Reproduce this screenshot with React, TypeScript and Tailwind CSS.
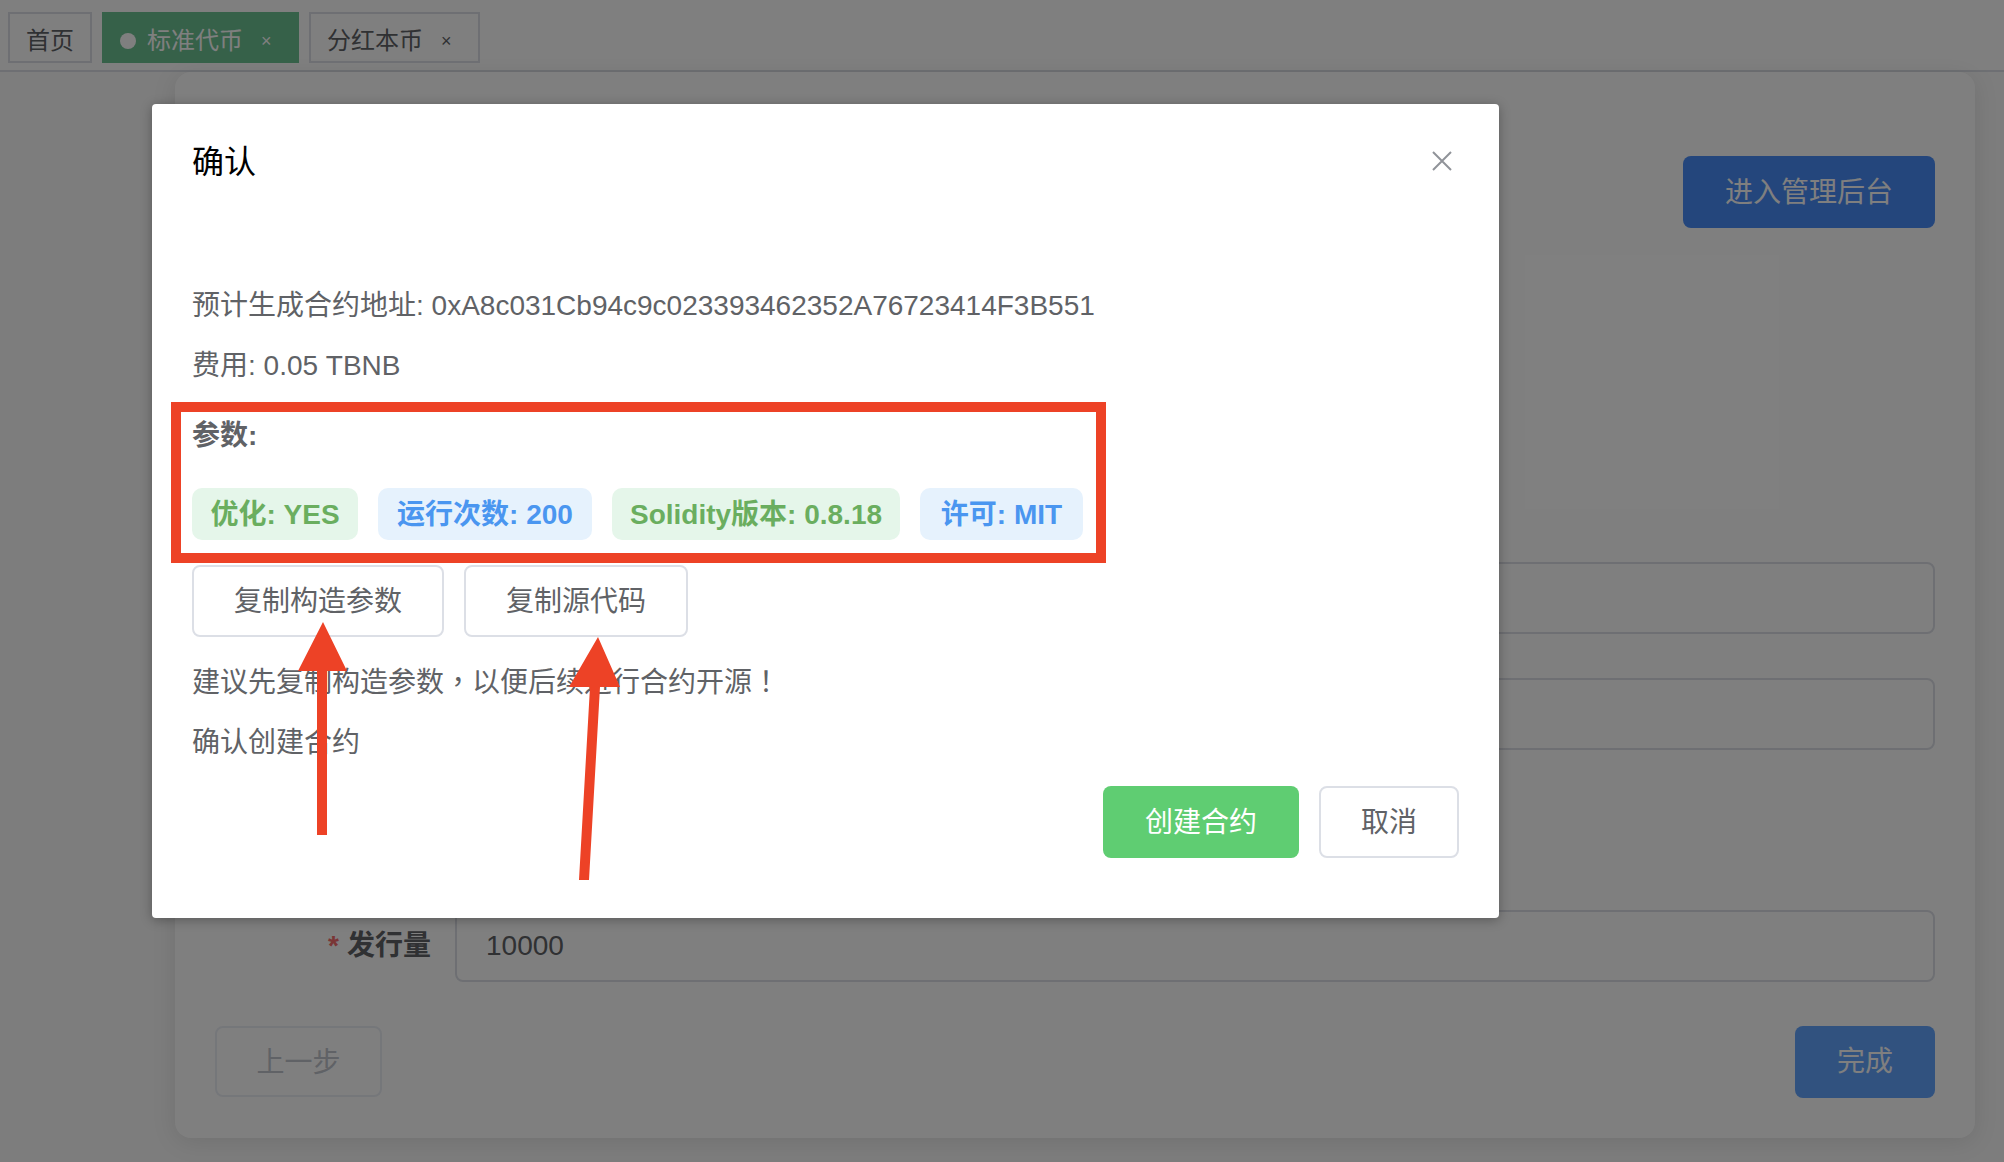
const tags = [
  { label: '优化: YES', green: true, width: 'w-[166px]' },
  { label: '运行次数: 200', green: false, width: 'w-[214px]' },
  { label: 'Solidity版本: 0.8.18', green: true, width: 'w-[288px]' },
  { label: '许可: MIT', green: false, width: 'w-[163px]' },
];

function Tab({ label, active, closable, width }: { label: string; active?: boolean; closable?: boolean; width: string }) {
  return (
    <div
      className={`flex h-[51px] items-center border-2 pt-[6px] text-[24px] ${width} ${
        active ? 'border-[#6cc292] bg-[#6cc292] pl-[16px] text-white' : 'border-[#dcdfe6] pl-[16px] text-[#606266]'
      }`}
    >
      {active && <span className="mr-[11px] h-[16px] w-[16px] rounded-full bg-white" />}
      <span>{label}</span>
      {closable && <span className="ml-[18px] text-[18px] leading-none">×</span>}
    </div>
  );
}

function FormRow({ label, value }: { label?: string; value?: string }) {
  return (
    <div className="flex items-center gap-[24px]">
      <div className="w-[216px] text-right text-[28px] font-bold text-[#606266]">
        {label && (
          <>
            <span className="mr-[8px] text-[#f56c6c]">*</span>
            {label}
          </>
        )}
      </div>
      <div className="flex h-[72px] flex-1 items-center rounded-[8px] border-2 border-[#dcdfe6] px-[29px] text-[28px] text-[#606266]">
        {value}
      </div>
    </div>
  );
}

export default function App() {
  return (
    <div className="relative h-[1162px] w-[2004px] overflow-hidden bg-[#fafafa] font-['Liberation_Sans','Noto_Sans_CJK_SC',sans-serif]">
      {/* Tabs bar */}
      <div className="flex h-[72px] items-start gap-[10px] border-b-2 border-[#dcdfe6] bg-white pl-[8px] pt-[12px]">
        <Tab label="首页" width="w-[84px]" />
        <Tab label="标准代币" active closable width="w-[197px]" />
        <Tab label="分红本币" closable width="w-[171px]" />
      </div>

      {/* Page card */}
      <div className="ml-[175px] h-[1066px] w-[1800px] rounded-[16px] bg-white px-[40px] pt-[84px] shadow-[0_4px_24px_rgba(0,0,0,0.1)]">
        <div className="flex justify-end">
          <button className="h-[72px] w-[252px] rounded-[8px] bg-[#488cf8] pt-[2px] text-[28px] text-white">进入管理后台</button>
        </div>
        <div className="mt-[334px]">
          <FormRow />
        </div>
        <div className="mt-[44px]">
          <FormRow />
        </div>
        <div className="mt-[160px]">
          <FormRow label="发行量" value="10000" />
        </div>
        <div className="mt-[44px] flex justify-between">
          <button className="h-[71px] w-[167px] rounded-[8px] border-2 border-[#ebeef5] pt-[2px] text-[28px] text-[#c0c4cc]">上一步</button>
          <button className="h-[72px] w-[140px] rounded-[8px] bg-[#62a4fe] text-[28px] text-white">完成</button>
        </div>
      </div>

      {/* Overlay + dialog */}
      <div className="absolute inset-0 bg-black/50">
        <div className="ml-[152px] mt-[104px] h-[814px] w-[1347px] rounded-[4px] bg-white px-[40px] pt-[36px] shadow-[0_2px_12px_rgba(0,0,0,0.3)]">
          <div className="flex h-[44px] items-center justify-between pr-[7px]">
            <span className="text-[32px] leading-[44px] text-black">确认</span>
            <svg width="20" height="20" viewBox="0 0 20 20" className="-mt-[2px] text-[#909399]">
              <path d="M1 1L19 19M19 1L1 19" stroke="currentColor" strokeWidth="2" fill="none" />
            </svg>
          </div>

          <div className="mt-[102px] text-[28px] leading-[40px] text-[#606266]">
            预计生成合约地址: 0xA8c031Cb94c9c023393462352A76723414F3B551
          </div>
          <div className="mt-[20px] text-[28px] leading-[40px] text-[#606266]">费用: 0.05 TBNB</div>

          {/* Red annotation box */}
          <div className="-ml-[21px] mt-[16px] h-[161px] w-[935px] border-[10px] border-[#ed4226] pl-[11px]">
            <div className="mt-[4px] text-[28px] font-bold leading-[40px] text-[#606266]">参数:</div>
            <div className="mt-[32px] flex gap-[20px]">
              {tags.map((tag) => (
                <span
                  key={tag.label}
                  className={`flex h-[52px] items-center justify-center whitespace-nowrap rounded-[10px] pt-[2px] text-[28px] font-bold ${tag.width} ${
                    tag.green ? 'bg-[#e5f6ea] text-[#6aae5f]' : 'bg-[#e6f2fd] text-[#4a96f0]'
                  }`}
                >
                  {tag.label}
                </span>
              ))}
            </div>
          </div>

          <div className="mt-[2px] flex gap-[20px]">
            <button className="h-[72px] w-[252px] rounded-[8px] border-2 border-[#dcdfe6] pt-[2px] text-[28px] text-[#606266]">复制构造参数</button>
            <button className="h-[72px] w-[224px] rounded-[8px] border-2 border-[#dcdfe6] pt-[2px] text-[28px] text-[#606266]">复制源代码</button>
          </div>

          <div className="mt-[23px] text-[28px] leading-[40px] text-[#606266]">
            建议先复制构造参数<span className="font-['Noto_Sans_CJK_TC']">，</span>以便后续进行合约开源<span className="font-['Noto_Sans_CJK_TC']">！</span>
          </div>
          <div className="mt-[20px] text-[28px] leading-[40px] text-[#606266]">确认创建合约</div>

          <div className="mt-[23px] flex justify-end gap-[20px]">
            <button className="h-[72px] w-[196px] rounded-[8px] bg-[#5fcd72] pt-[2px] text-[28px] text-white">创建合约</button>
            <button className="h-[72px] w-[140px] rounded-[8px] border-2 border-[#dcdfe6] pt-[2px] text-[28px] text-[#606266]">取消</button>
          </div>
        </div>
      </div>

      {/* Hand-drawn arrows */}
      <svg className="pointer-events-none absolute inset-0" width="2004" height="1162" viewBox="0 0 2004 1162">
        <polygon fill="#ed4226" points="323,622 347,671 327,671 327,835 317,835 317,671 298,671" />
        <polygon fill="#ed4226" points="598,637 620,687 600,687 589,880 579,880 590,687 569,687" />
      </svg>
    </div>
  );
}
